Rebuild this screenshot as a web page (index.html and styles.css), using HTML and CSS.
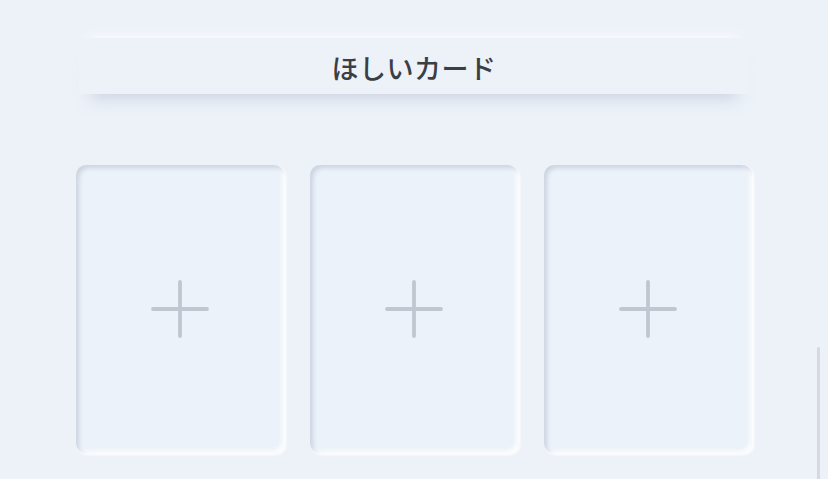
FILE: index.html
```html
<!DOCTYPE html>
<html lang="ja">
<head>
<meta charset="utf-8">
<link rel="stylesheet" href="styles.css">
</head>
<body>
<div class="page">
  <header class="title-bar">
    <h1 class="title">ほしいカード</h1>
  </header>
  <section class="cards">
    <div class="slot">
      <svg class="plus" viewBox="0 0 60 60" width="60" height="60"><path d="M30 3V57M3 30H57"/></svg>
    </div>
    <div class="slot">
      <svg class="plus" viewBox="0 0 60 60" width="60" height="60"><path d="M30 3V57M3 30H57"/></svg>
    </div>
    <div class="slot">
      <svg class="plus" viewBox="0 0 60 60" width="60" height="60"><path d="M30 3V57M3 30H57"/></svg>
    </div>
  </section>
  <div class="scroll-thumb"></div>
</div>
</body>
</html>
```
FILE: styles.css
```css
html, body {
  margin: 0;
  padding: 0;
  background: #edf2f9;
}
body {
  font-family: "Noto Sans CJK JP", "Noto Sans", sans-serif;
  overflow: hidden;
}
.page {
  position: relative;
  width: 828px;
  height: 479px;
  padding-top: 38px;
  box-sizing: border-box;
}
.title-bar {
  margin: 0 auto;
  width: 670px;
  height: 56px;
  display: flex;
  align-items: center;
  justify-content: center;
  background: #edf2f9;
  box-shadow: 0 16px 16px -12px rgba(170, 180, 198, 0.5),
              0 -10px 14px -10px rgba(255, 255, 255, 0.95);
}
.title {
  margin: 0;
  font-size: 27px;
  font-weight: 500;
  color: #3b3e44;
  letter-spacing: 0.5px;
  line-height: 1;
  padding-top: 2px;
}
.cards {
  margin-top: 71px;
  display: flex;
  justify-content: center;
  gap: 26px;
}
.slot {
  width: 208px;
  height: 288px;
  border-radius: 10px;
  background: #ecf2fa;
  box-shadow: inset 3px 3px 4px rgba(176, 187, 204, 0.55),
              inset -2px -2px 4px rgba(255, 255, 255, 0.9),
              2px 2px 3px rgba(255, 255, 255, 0.9);
  display: flex;
  align-items: center;
  justify-content: center;
}
.plus {
  fill: none;
  stroke: #c1c7d0;
  stroke-width: 3.8;
  stroke-linecap: round;
}
.scroll-thumb {
  position: absolute;
  right: 8px;
  top: 347px;
  width: 3px;
  height: 140px;
  border-radius: 2px;
  background: #d6dae0;
}
```
